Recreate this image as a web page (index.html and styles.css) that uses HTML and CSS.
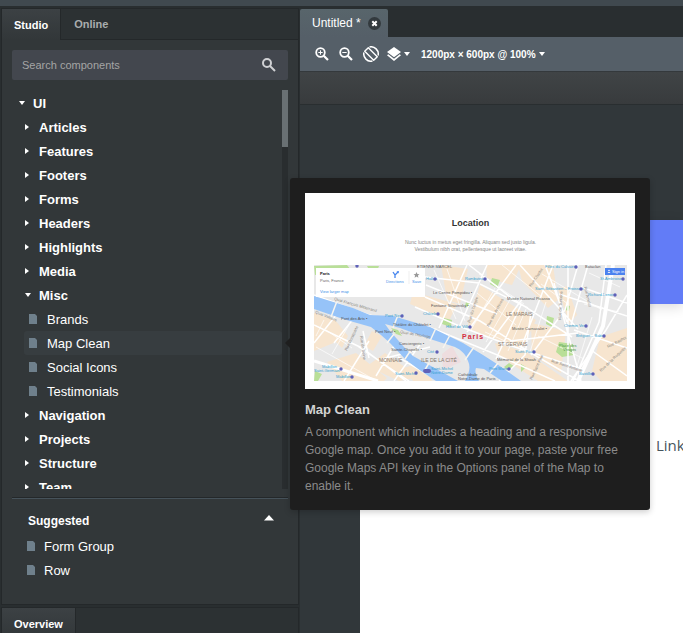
FILE: index.html
```html
<!DOCTYPE html>
<html lang="en">
<head>
<meta charset="utf-8">
<meta name="viewport" content="width=device-width, initial-scale=1">
<title>Untitled</title>
<link rel="stylesheet" href="styles.css">
</head>
<body>
<svg class="defs" aria-hidden="true">
  <symbol id="down" viewBox="0 0 8 8"><path d="M1 2h6L4 6z"/></symbol>
  <symbol id="right" viewBox="0 0 8 8"><path d="M1 1v6l4-3z"/></symbol>
  <symbol id="file" viewBox="0 0 8 10"><path d="M0 0h6l2 2V10H0z"/></symbol>
</svg>
<div class="app">
  <aside class="sidebar">
    <section class="panel components">
      <div class="tabs">
        <button class="tab active">Studio</button>
        <button class="tab">Online</button>
      </div>
      <div class="panel-body">
        <label class="search">
          <input type="text" placeholder="Search components" aria-label="Search components">
          <svg viewBox="0 0 14 14" fill="none" stroke="#d0d1d4" stroke-width="2"><circle cx="5" cy="5" r="4"/><path d="M8 8l5 5"/></svg>
        </label>
        <div class="tree-view">
          <ul class="tree">
            <li><button class="row root"><svg class="caret"><use href="#down"/></svg>UI</button></li>
            <li><button class="row"><svg class="caret"><use href="#right"/></svg>Articles</button></li>
            <li><button class="row"><svg class="caret"><use href="#right"/></svg>Features</button></li>
            <li><button class="row"><svg class="caret"><use href="#right"/></svg>Footers</button></li>
            <li><button class="row"><svg class="caret"><use href="#right"/></svg>Forms</button></li>
            <li><button class="row"><svg class="caret"><use href="#right"/></svg>Headers</button></li>
            <li><button class="row"><svg class="caret"><use href="#right"/></svg>Highlights</button></li>
            <li><button class="row"><svg class="caret"><use href="#right"/></svg>Media</button></li>
            <li><button class="row"><svg class="caret"><use href="#down"/></svg>Misc</button>
              <ul class="items">
                <li><button class="item"><svg class="file"><use href="#file"/></svg>Brands</button></li>
                <li><button class="item selected"><svg class="file"><use href="#file"/></svg>Map Clean</button></li>
                <li><button class="item"><svg class="file"><use href="#file"/></svg>Social Icons</button></li>
                <li><button class="item"><svg class="file"><use href="#file"/></svg>Testimonials</button></li>
              </ul>
            </li>
            <li><button class="row"><svg class="caret"><use href="#right"/></svg>Navigation</button></li>
            <li><button class="row"><svg class="caret"><use href="#right"/></svg>Projects</button></li>
            <li><button class="row"><svg class="caret"><use href="#right"/></svg>Structure</button></li>
            <li><button class="row"><svg class="caret"><use href="#right"/></svg>Team</button></li>
          </ul>
          <div class="track"><div class="thumb"></div></div>
        </div>
        <div class="suggested">
          <button class="suggested-title">Suggested <svg viewBox="0 0 10 6"><path d="M0 5.500L5 0l5 5.500z"/></svg></button>
          <ul>
            <li><button class="item"><svg class="file"><use href="#file"/></svg>Form Group</button></li>
            <li><button class="item"><svg class="file"><use href="#file"/></svg>Row</button></li>
          </ul>
        </div>
      </div>
    </section>
    <section class="panel overview">
      <div class="tabs"><button class="tab active">Overview</button></div>
    </section>
  </aside>

  <main class="workspace">
    <div class="doc-tabs">
      <div class="doc-tab">Untitled *
        <button class="close" aria-label="Close"><svg viewBox="0 0 13 13"><circle cx="6.500" cy="6.500" r="6.500" fill="#333a3e"/><path d="M4.300 4.300l4.400 4.400M8.700 4.300L4.300 8.700" stroke="#fff" stroke-width="2"/></svg></button>
      </div>
    </div>
    <div class="toolbar">
      <button aria-label="Zoom in"><svg viewBox="0 0 14 14" width="14" height="14" fill="none" stroke="#fff"><circle cx="5.500" cy="5.500" r="4.300" stroke-width="1.800"/><path d="M8.700 8.700l4.300 4.300" stroke-width="2.200"/><path d="M3.300 5.500h4.400M5.500 3.300v4.400"/></svg></button>
      <button aria-label="Zoom out"><svg viewBox="0 0 14 14" width="14" height="14" fill="none" stroke="#fff"><circle cx="5.500" cy="5.500" r="4.300" stroke-width="1.800"/><path d="M8.700 8.700l4.300 4.300" stroke-width="2.200"/><path d="M3.300 5.500h4.400"/></svg></button>
      <button aria-label="Rotate"><svg viewBox="0 0 16 16" width="16" height="16" fill="none" stroke="#fff"><path d="M5.300 1.700L14.300 10.700 10.700 14.300 1.700 5.300z" stroke-width="1.400" stroke-linejoin="round"/><path d="M6.500.9A7.300 7.300 0 0 1 15.100 9.500M9.500 15.100A7.300 7.300 0 0 1 .9 6.500" stroke-width="1.500"/></svg></button>
      <button class="layers" aria-label="Layers"><svg viewBox="0 0 14 14" width="14" height="14" fill="#fff"><path d="M7 0l7 5-7 5.200L0 5z"/><path d="M0 8.300l1.300-1L7 11.700l5.700-4.400 1.300 1L7 14z"/></svg><svg class="caret"><use href="#down"/></svg></button>
      <button class="size">1200px × 600px @ 100% <svg class="caret"><use href="#down"/></svg></button>
    </div>
    <div class="options-bar"></div>
    <div class="canvas">
      <div class="page">
        <div class="hero"></div>
        <nav><a href="#link">Link</a></nav>
      </div>
    </div>
  </main>
</div>

<div class="popover" role="tooltip">
  <div class="preview">
    <h2>Location</h2>
    <p>Nunc luctus in metus eget fringilla. Aliquam sed justo ligula.<br>Vestibulum nibh orat, pellentesque ut laoreet vitae.</p>
    <svg class="map" viewBox="0 0 313 116" role="img" aria-label="Map of Paris">
      <rect width="313" height="116" fill="#e8e8e8"/>
      <g fill="#f7e5cf">
        <path d="M0 48l22 8 12 15-6 12L22 77 0 86zM13 97l29-9 31 25-3 3H28zM58 66l10 5-9 15-9-5zM99 27l44 12-8 17-39-17zM127 0l27 4-8 35-13-4zM166 20l56 35-14 29-55-21zM172 0h35l-9 20-25-7zM204 0h35l5 35-10 8-26-27zM181 78l31 9 42 29h-30l-39-25zM244 24l9-3 10 29-8 8zM217 58l35 8-5 42-29-18zM286 72l27-9v53h-26l-9-10zM53 101l18-13 34 24-20 4zM90 103l20-7 8 20H99z"/>
      </g>
      <g fill="#eedddf"><path d="M128 89l10-8 9 16-18 8z"/></g>
      <g fill="#b9df98"><path d="M0 1l33-1 4 5-36 5zM178 13l8 2-3 8-7-4zM245 77l14 2 1 11-12 2-6-5zM233 51l7 2-2 9-6-3zM195 98l5 3-5 5-5-4zM207 99l5 3-5 5zM130 53l8 2-1 7-9-3zM77 63l7 2 4 6-6-2zM53 1h12l-2 5-8-1zM1 106l7 3-4 7H0zM252 40l4 1-1 5-4-1zM152 37l4 1-1 5-4-2z"/></g>
      <g fill="none" stroke="#fff" stroke-width="1.500">
        <path d="M0 30l55 20 60 12 66 27 60 27M0 60l48 23 44 33M0 78l27-34M20 78l20-25M42 80l53 36M49 66l6 27M30 116l25-40M62 111l18-30M80 116l27-38M111 32l55 24 51 32 48 28M101 42l49 21 45 17 76 25M112 20l71 29M153 0l-28 63M173 0l-27 60M155 0l44 34 59 38M202 0l-49 67M239 0l-34 88M206 0l58 64M166 19l48 24M231 0l22 57M254 0v116M264 0l-13 45-34 45M274 0l-17 60M240 18l27 98M267 22l46 16M245 29l68 22M292 0l-7 57-22 51-4 8M313 30l-21 35-35 51M277 85l36 26M260 65l53 18M217 47l-6 43-26 26M169 87l40-54M182 94l25-54M196 76l68-8M111 12l54 6M84 92l34 20M68 94l48-12"/>
        <path d="M299 0l-10 61-25 55" stroke-width="4"/>
        <path d="M0 96l64 20" stroke-width="3"/>
      </g>
      <g stroke="#fff" fill="none" stroke-width=".7"><path d="M165 9l45 30M163 28l39 32M188 0l40 32M227 19l27 20M171 67l31 14M181 23l-24 42M198 31l-26 46M212 44l-18 42M120 5l22 49M133 4l18 52M10 55l-8 16M35 60l-17 29M12 65l26 18M2 82l59 33M94 98l22 10M228 9l60 36M224 71l46 23M232 37l-16 50M275 8l31 14M270 39l35 8M278 52l-15 49"/></g>
      <path d="M0 31L39 43 56 50 79 51 116 62 149 78 169 90 183 99 207 116H188L170 104 162 103Q160 108 165 116H151Q158 104 154 96C151 88 147 85 141 82L116 74 86 63 71 59 76 66 90 82 99 91 117 101 144 116H122L107 106 92 95 76 78 67 70 57 62 29 54 0 44z" fill="#96c3f8"/>
      <g stroke="#f7f5ef" stroke-width="1.500"><path d="M23 36l-6 16M84 50l-5 13M122 63l-6 13M136 70l-7 13M160 82l-9 13M80 69l-7 9M97 85l-6 9M115 98l-6 10M184 98l-8 10"/></g>
      <g class="roads">
        <text transform="translate(1 48) rotate(22)">Quai Voltaire</text><text transform="translate(20 35) rotate(16)">Quai François Mitterrand</text><text transform="translate(33 86) rotate(-65)">Rue Bonaparte</text><text transform="translate(46 71) rotate(82)">Rue de Seine</text><text transform="translate(86 68) rotate(10)">Quai de l'Horloge</text><text transform="translate(217 22) rotate(-55)">Rue Charlot</text><text transform="translate(175 62) rotate(-62)">Rue des Archives</text><text transform="translate(247 55) rotate(-87)">Rue de Turenne</text><text transform="translate(270 22) rotate(77)">Rue Amelot</text><text transform="translate(237 97) rotate(18)">Rue Saint-Antoine</text><text transform="translate(287 107) rotate(-43)">Rue de la Roquette</text><text transform="translate(294 83) rotate(-27)">Rue Basfroi</text><text transform="translate(218 115) rotate(-65)">Rue Saint-Paul</text><text transform="translate(156 58) rotate(-72)">Rue du Temple</text>
      </g>
      <g class="places">
        <text x="119" y="29">Le Centre Pompidou •</text><text x="117" y="42">Fontaine Stravinsky •</text><text x="27" y="55">Pont des Arts •</text><text x="79" y="61">Théâtre du Châtelet •</text><text x="61" y="68">Pont Neuf •</text><text x="85" y="80">Conciergerie •</text><text x="77" y="86">Sainte-Chapelle •</text><text x="144" y="111">Cathédrale</text><text x="144" y="115">Notre-Dame de Paris</text><text x="193" y="35">Musée National Picasso</text><text x="198" y="65">Musée Carnavalet •</text><text x="183" y="96">Mémorial de la Shoah</text><text x="103" y="3">ETIENNE MARCEL</text><text x="271" y="3">Bataclan</text>
      </g>
      <g class="areas"><text x="65" y="97">MONNAIE</text><text x="107" y="97">ILE DE LA CITÉ</text><text x="192" y="51">LE MARAIS</text><text x="184" y="81">ST GERVAIS</text></g>
      <text class="paris" x="148" y="74">Paris</text>
      <g class="stations"><text x="71" y="52">Pont Neuf</text><text x="109" y="50">Châtelet</text><text x="132" y="63">Hôtel de Ville</text><text x="112" y="15">Halles</text><text x="8" y="103">Mabillon</text><text x="0" y="107">Saint-Germain</text><text x="81" y="110">Saint-Michel</text><text x="117" y="105">Saint-Michel</text><text x="117" y="109">Notre-Dame</text><text x="113" y="88">Cité</text><text x="231" y="3">Filles du Calvaire</text><text x="221" y="25">Saint-Sébastien – Froissart</text><text x="274" y="31">Richard-Lenoir</text><text x="286" y="15">St-Ambroise</text><text x="250" y="62">Chemin Vert</text><text x="262" y="72">Bréguet – Sabin</text><text x="201" y="88">Saint-Paul</text><text x="175" y="105">Pont Marie</text><text x="265" y="110">Bastille</text><text x="22" y="113">Mabillon</text><text x="151" y="15">Rambuteau</text></g>
      <g class="green"><text x="245" y="82">Place des</text><text x="249" y="86">Vosges</text></g>
      <g fill="#5f61b8"><circle cx="43" cy="1" r="1.700"/><circle cx="88" cy="51" r="1.700"/><circle cx="124" cy="49" r="1.700"/><circle cx="121" cy="14" r="1.700"/><circle cx="156" cy="62" r="1.700"/><circle cx="38" cy="112" r="1.700"/><circle cx="27" cy="104" r="1.700"/><circle cx="102" cy="108" r="1.700"/><circle cx="123" cy="87" r="1.700"/><rect x="109" y="104" width="8" height="4" rx="2"/><circle cx="262" cy="2" r="1.700"/><circle cx="267" cy="24" r="1.700"/><circle cx="301" cy="30" r="1.700"/><circle cx="309" cy="14" r="1.700"/><circle cx="272" cy="61" r="1.700"/><circle cx="290" cy="71" r="1.700"/><circle cx="220" cy="87" r="1.700"/><circle cx="195" cy="104" r="1.700"/><circle cx="279" cy="109" r="1.700"/><circle cx="171" cy="14" r="1.700"/></g>
      <rect x="2" y="3" width="109" height="29" fill="#fff"/>
      <text class="card-title" x="6" y="10">Paris</text>
      <text class="card-text" x="6" y="17">Paris, France</text>
      <g class="card-link"><text x="6" y="28">View larger map</text><text x="72" y="18">Directions</text><text x="98" y="18">Save</text></g>
      <path d="M81 13v-3l3-3M81 10l-2-3" fill="none" stroke="#4685ee" stroke-width="1.300"/><path d="M82.500 6.500l2.500-.5-.5 2.500z" fill="#4685ee"/>
      <path d="M95 6v13" stroke="#ddd" stroke-width=".5"/>
      <path d="M102.500 7l.9 2 2.100.2-1.600 1.400.5 2.100-1.900-1.100-1.900 1.100.5-2.100-1.600-1.400 2.100-.2z" fill="#999"/>
      <rect x="291" y="3" width="20" height="7" fill="#4b82ef"/><circle cx="295" cy="5.500" r=".8" fill="#fff"/><path d="M293.500 8q1.500-2 3 0z" fill="#fff"/><text class="sign-in" x="298" y="8">Sign in</text>
    </svg>
  </div>
  <h3>Map Clean</h3>
  <p class="description">A component which includes a heading and a responsive Google map. Once you add it to your page, paste your free Google Maps API key in the Options panel of the Map to enable it.</p>
</div>
</body>
</html>
```
FILE: styles.css
```css
* { box-sizing: border-box; }

body {
  margin: 0;
  overflow: hidden;
  background: #292e30;
  color: #fff;
  font-family: "Liberation Sans", Arial, sans-serif;
  font-size: 13px;
}

ul { list-style: none; margin: 0; padding: 0; }

button {
  display: flex;
  align-items: center;
  border: 0;
  padding: 0;
  background: none;
  color: inherit;
  font: inherit;
}

svg { display: block; flex: none; }
.defs { position: absolute; width: 0; height: 0; }
.caret { width: 8px; height: 8px; fill: #fff; }
.file { width: 8px; height: 10px; fill: #6f808c; }

.app {
  display: grid;
  grid-template-columns: 300px 1fr;
  height: 100vh;
  border-top: 6px solid #40494f;
}

.sidebar {
  display: flex;
  flex-direction: column;
  gap: 2px;
  min-height: 0;
  padding: 2px 1px 0;
}

.panel { border: 1px solid #24282a; background: #323739; }
.components { display: flex; flex: 1; flex-direction: column; min-height: 0; }
.overview { height: 26px; border-bottom: 0; }

.tabs { display: flex; flex: none; height: 31px; background: #2c3133; }
.tab {
  padding: 0 13px;
  border-bottom: 1px solid #24282a;
  color: #a9adae;
  font-size: 11px;
  font-weight: bold;
}
.tabs::after { content: ""; flex: 1; border-bottom: 1px solid #24282a; }
.tab.active {
  padding: 0 12px;
  border-right: 1px solid #24282a;
  border-bottom: 0;
  background: linear-gradient(#3c4144, #323739);
  color: #fff;
}

.panel-body {
  display: flex;
  flex: 1;
  flex-direction: column;
  min-height: 0;
  padding: 10px 10px 0;
}

.search {
  display: flex;
  flex: none;
  align-items: center;
  height: 30px;
  padding: 0 12px 0 10px;
  border-radius: 2px;
  background: #43474e;
}
.search input {
  flex: 1;
  min-width: 0;
  padding: 0;
  border: 0;
  background: none;
  color: #fff;
  font: 11px "Liberation Sans", Arial, sans-serif;
}
.search input::placeholder { color: #a5a5a5; }
.search svg { width: 14px; height: 14px; }

.tree-view {
  display: flex;
  flex: 1;
  min-height: 0;
  margin-top: 10px;
  overflow: hidden;
}
.tree { flex: 1; padding-top: 1px; }
.row {
  gap: 7px;
  width: 100%;
  height: 24px;
  padding-left: 12px;
  font-weight: bold;
}
.row.root { padding-left: 6px; }
.items { padding-left: 12px; }
.item { gap: 10px; width: 100%; height: 24px; padding-left: 5px; }
.item.selected { border-radius: 3px; background: #373d40; }

.track { width: 6px; background: #292d2f; }
.thumb { height: 57px; background: #697073; }

.suggested {
  flex: none;
  height: 106px;
  margin-top: 9px;
  padding-top: 9px;
  border-top: 1px solid #46525a;
  box-shadow: 0 -1px #24282a;
}
.suggested-title {
  justify-content: space-between;
  width: 100%;
  height: 26px;
  padding: 0 14px 0 16px;
  font-size: 12px;
  font-weight: bold;
}
.suggested-title svg { width: 10px; height: 6px; margin-bottom: 6px; fill: #fff; }
.suggested ul { padding-left: 10px; }
.suggested .item { gap: 9px; }

.workspace { display: flex; flex-direction: column; min-width: 0; }
.doc-tabs { display: flex; flex: none; height: 31px; padding-top: 3px; }
.doc-tab {
  display: flex;
  align-items: center;
  gap: 7px;
  padding: 0 7px 0 12px;
  border-radius: 2px 2px 0 0;
  background: linear-gradient(#58656b, #555f68);
  font-size: 12px;
}
.close svg { width: 13px; height: 13px; }

.toolbar {
  display: flex;
  flex: none;
  align-items: center;
  gap: 10px;
  height: 34px;
  padding-left: 15px;
  background: #555f68;
}
.toolbar button { flex: none; }
.toolbar .layers { gap: 2px; margin-left: -2px; }
.toolbar .size { gap: 2px; font-size: 10px; font-weight: bold; }
.options-bar {
  flex: none;
  height: 34px;
  border-top: 1px solid #34393c;
  border-bottom: 1px solid #292e30;
  background: linear-gradient(#404446, #383b3d);
}

.canvas { flex: 1; padding: 115px 0 0 60px; background: #31373a; }
.page { height: 100%; background: #fff; }
.hero {
  height: 84px;
  background: #627cf7;
  box-shadow: 0 3px 12px rgba(0, 0, 0, .14);
}
.page nav { padding: 130px 0 0 296px; }
.page a {
  color: #46555d;
  font: 15px/22px "Open Sans", sans-serif;
  text-decoration: none;
}

.popover {
  position: absolute;
  top: 178px;
  left: 290px;
  width: 360px;
  padding: 15px;
  border-radius: 3px;
  background: #1e1e1e;
  box-shadow: 0 2px 6px rgba(0, 0, 0, .2);
}
.popover::before {
  content: "";
  position: absolute;
  top: 160px;
  left: -5px;
  border: 5px solid transparent;
  border-left: 0;
  border-right-color: #1e1e1e;
}
.popover h3 {
  margin: 12px 0 5px;
  color: #d2d2d2;
  font-size: 13px;
  line-height: 17px;
}
.description { margin: 0; color: #8b8b8b; font-size: 12px; line-height: 18px; }

.preview {
  padding: 24px 8px 8px 9px;
  background: #fff;
  color: #333;
  text-align: center;
}
.preview h2 { margin: 0; font-size: 9px; line-height: 12px; }
.preview p { margin: 10px 0 12px; color: #888; font-size: 5px; line-height: 7px; }
.map { width: 100%; text-align: left; }
.map text { font-size: 4px; }
.roads { fill: #8a8580; }
.places { fill: #555; }
.map .areas text { fill: #85786b; font-size: 5px; }
.stations { fill: #359fcf; }
.green { fill: #4a9649; }
.map .paris { fill: #d52f3f; font-size: 7px; font-weight: bold; letter-spacing: 1px; }
.map .card-title { fill: #111; font-weight: bold; }
.card-text { fill: #666; }
.card-link { fill: #4390e8; }
.sign-in { fill: #fff; }
```
